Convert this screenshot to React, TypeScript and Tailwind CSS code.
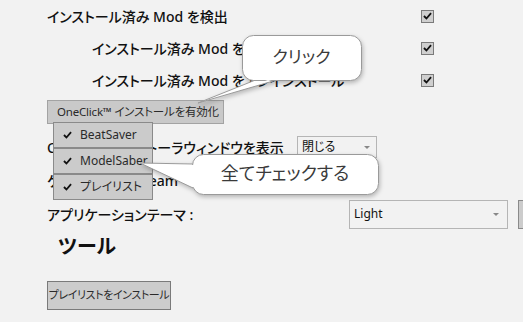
import * as React from "react";

const Check = ({ className }: { className?: string }) => (
  <svg viewBox="0 0 10 9" className={className}>
    <path d="M1 4.5 L3.8 7.3 L9 1.2" fill="none" stroke="#111" strokeWidth="2" />
  </svg>
);

const CheckBox = () => (
  <div className="flex h-[13px] w-[13px] items-center justify-center border border-[#7a7a7a] bg-[#cfcfcf]">
    <Check className="h-[8px] w-[9px]" />
  </div>
);

interface RowProps {
  label: string;
  indent?: boolean;
}

const CheckRow: React.FC<RowProps> = ({ label, indent }) => (
  <div className="flex h-[32px] items-center">
    <div className={indent ? "w-[374px] shrink-0 pl-[45px]" : "w-[374px] shrink-0"}>{label}</div>
    <CheckBox />
  </div>
);

const MenuItem = ({ name }: { name: string }) => (
  <div className="flex h-[24px] items-center pl-[9px] text-[12px] font-normal text-[#2a2a2a]">
    <Check className="h-[8px] w-[9px]" />
    <span className="ml-[8px] whitespace-nowrap">{name}</span>
  </div>
);

const Callout = ({
  box,
  tail,
  cover,
  text,
  textClass,
}: {
  box: [number, number, number, number];
  tail: string;
  cover: string;
  text: string;
  textClass: string;
}) => (
  <>
    <svg
      className="pointer-events-none absolute left-0 top-0 h-[322px] w-[523px] drop-shadow-[1px_2px_2px_rgba(0,0,0,0.25)]"
      viewBox="0 0 523 322"
    >
      <polygon points={tail} fill="#fff" stroke="#9a9a9a" strokeWidth="1" />
      <rect
        x={box[0] + 0.5}
        y={box[1] + 0.5}
        width={box[2]}
        height={box[3]}
        rx="11"
        fill="#fff"
        stroke="#9a9a9a"
        strokeWidth="1"
      />
      <polygon points={cover} fill="#fff" />
    </svg>
    <div
      className={"absolute flex items-center justify-center whitespace-nowrap text-[#3a3a3a] " + textClass}
      style={{ left: box[0], top: box[1], width: box[2], height: box[3] }}
    >
      {text}
    </div>
  </>
);

export default function App() {
  return (
    <div className="relative h-[322px] w-[523px] overflow-hidden bg-[#f2f2f2] font-['Noto_Sans','Noto_Sans_CJK_JP',sans-serif] text-[14px] font-medium text-[#111] [font-feature-settings:'palt']">
      <div className="pl-[47px]">
        <CheckRow label="インストール済み Mod を検出" />
        <CheckRow label="インストール済み Mod を無効化" indent />
        <CheckRow label="インストール済み Mod をアンインストール" indent />

        <button className="mt-[4px] flex h-[24px] w-[177px] items-center whitespace-nowrap border border-[#a3a3a3] bg-[#c9c9c9] pl-[9px] text-[11.5px] font-normal tracking-[-0.2px] text-[#2a2a2a]">
          OneClick™ インストールを有効化
        </button>

        <div className="mt-[11px] flex h-[24px] items-center">
          <div className="w-[250px] shrink-0 whitespace-nowrap">OneClick インストーラウィンドウを表示</div>
          <div className="flex h-[22px] w-[80px] shrink-0 items-center justify-between border border-[#b5b5b5] bg-[#f2f2f2] pl-[4px] pr-[6px] text-[12px] font-normal">
            <span>閉じる</span>
            <span className="h-0 w-0 border-x-[3px] border-t-[3px] border-x-transparent border-t-[#888]" />
          </div>
        </div>

        <div className="mt-[9px] flex h-[24px] items-center whitespace-nowrap">ゲームタイプ : Steam</div>

        <div className="mt-[8px] flex h-[28px] items-center">
          <div className="w-[302px] shrink-0">アプリケーションテーマ :</div>
          <div className="flex h-[29px] w-[159px] shrink-0 items-center justify-between border border-[#b5b5b5] bg-[#f2f2f2] pl-[4px] pr-[8px] text-[12px] font-normal">
            <span>Light</span>
            <span className="h-0 w-0 border-x-[3px] border-t-[3px] border-x-transparent border-t-[#888]" />
          </div>
          <div className="ml-[10px] h-[29px] w-[20px] shrink-0 border border-[#8a8a8a] bg-[#cccccc]" />
        </div>

        <div className="mt-[4px] flex h-[30px] items-center pl-[11px] text-[20px] font-bold">ツール</div>

        <button className="mt-[19px] flex h-[29px] w-[124px] items-center justify-center whitespace-nowrap border border-[#7a7a7a] bg-[#cccccc] text-[11px] font-normal tracking-[-0.4px] text-[#2a2a2a]">
          プレイリストをインストール
        </button>
      </div>

      {/* dropdown menu */}
      <div className="absolute left-[53px] top-[122px] w-[100px] border border-[#8a8a8a] bg-[#cbcbcb]">
        <MenuItem name="BeatSaver" />
        <div className="h-[2px] bg-[#8a8a8a]" />
        <MenuItem name="ModelSaber" />
        <div className="h-[2px] bg-[#8a8a8a]" />
        <MenuItem name="プレイリスト" />
      </div>

      <Callout
        box={[242, 35, 119, 45]}
        tail="258,79 280,79 198,103"
        cover="259,78 279,78 268,81"
        text="クリック"
        textClass="text-[17px] font-normal pb-[2px]"
      />
      <Callout
        box={[192, 154, 186, 40]}
        tail="193,164 193,188 140,163"
        cover="192,165 196,165 196,187 192,187"
        text="全てチェックする"
        textClass="text-[18px] font-normal pb-[2px]"
      />
    </div>
  );
}
